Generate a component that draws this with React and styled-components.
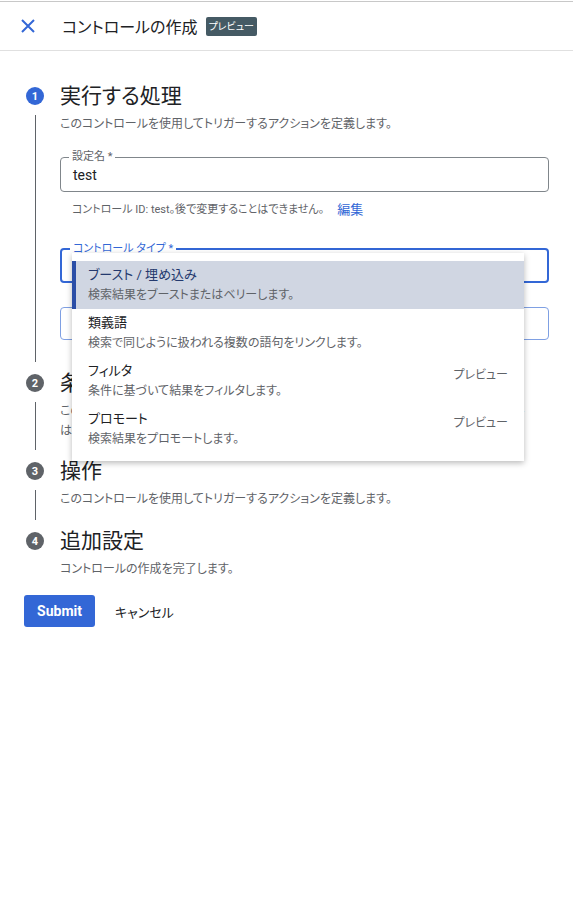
import styled, { createGlobalStyle } from 'styled-components';

const GlobalStyle = createGlobalStyle`
  body {
    margin: 0;
    padding-top: 1px;
    background: #fff;
    font-family: Roboto, "Noto Sans CJK JP", sans-serif;
    font-feature-settings: "palt";
    color: #202124;
  }
`;

const steps = [
  {
    n: 1,
    title: '実行する処理',
    desc: 'このコントロールを使用してトリガーするアクションを定義します。',
    active: true,
    pad: 31,
  },
  {
    n: 2,
    title: '条件',
    desc: 'このコントロールを適用する条件を定義します。条件が指定されていない場合、コントロール\nは常にすべての検索に適用されます。',
    pad: 18,
  },
  {
    n: 3,
    title: '操作',
    desc: 'このコントロールを使用してトリガーするアクションを定義します。',
    pad: 20,
  },
  {
    n: 4,
    title: '追加設定',
    desc: 'コントロールの作成を完了します。',
    last: true,
    pad: 0,
  },
];

const options = [
  { title: 'ブースト / 埋め込み', desc: '検索結果をブーストまたはベリーします。', selected: true },
  { title: '類義語', desc: '検索で同じように扱われる複数の語句をリンクします。' },
  { title: 'フィルタ', desc: '条件に基づいて結果をフィルタします。', preview: true },
  { title: 'プロモート', desc: '検索結果をプロモートします。', preview: true },
];

const App = () => {
  return (
    <Page>
      <GlobalStyle />
      <Header>
        <CloseButton aria-label="閉じる">
          <svg width="14" height="14" viewBox="0 0 14 14">
            <path d="M1 1 L13 13 M13 1 L1 13" stroke="#3367d6" strokeWidth="2" fill="none" />
          </svg>
        </CloseButton>
        <HeaderTitle>コントロールの作成</HeaderTitle>
        <Badge>プレビュー</Badge>
      </Header>
      <Main>
        {steps.map((s) => (
          <Step key={s.n}>
            <Circle active={s.active}>{s.n}</Circle>
            <StepTitle>{s.title}</StepTitle>
            <Rail>{!s.last && <RailLine />}</Rail>
            <StepBody pad={s.pad}>
              <Description>{s.desc}</Description>
              {s.active && (
                <>
                  <Field>
                    <FieldLabel>設定名 *</FieldLabel>
                    <FieldValue>test</FieldValue>
                  </Field>
                  <Helper>
                    <span>コントロール ID: test。後で変更することはできません。</span>
                    <EditLink>編集</EditLink>
                  </Helper>
                  <Field focused spaced>
                    <FieldLabel focused>コントロール タイプ *</FieldLabel>
                    <Menu>
                      {options.map((o) => (
                        <MenuItem key={o.title} selected={o.selected}>
                          <ItemText>
                            <ItemTitle selected={o.selected}>{o.title}</ItemTitle>
                            <ItemDesc>{o.desc}</ItemDesc>
                          </ItemText>
                          {o.preview && <ItemTag>プレビュー</ItemTag>}
                        </MenuItem>
                      ))}
                    </Menu>
                  </Field>
                  <Field hint short />
                </>
              )}
            </StepBody>
          </Step>
        ))}
        <Actions>
          <SubmitButton>Submit</SubmitButton>
          <CancelButton>キャンセル</CancelButton>
        </Actions>
      </Main>
    </Page>
  );
};

const Page = styled.div`
  border-top: 1px solid #c8c8c8;
  min-height: 910px;
`;

const Header = styled.div`
  height: 48px;
  display: flex;
  align-items: center;
  padding: 0 0 0 21px;
  border-bottom: 1px solid #e0e0e0;
`;

const CloseButton = styled.button`
  border: none;
  background: none;
  padding: 0;
  width: 14px;
  height: 14px;
  display: flex;
  margin-right: 27px;
  cursor: pointer;
`;

const HeaderTitle = styled.h1`
  margin: 0;
  font-size: 16px;
  font-weight: 400;
  color: #202124;
`;

const Badge = styled.span`
  margin-left: 8px;
  background: #455a64;
  color: #fff;
  font-size: 10px;
  line-height: 19px;
  padding: 0 3px;
  border-radius: 2px;
`;

const Main = styled.div`
  padding: 33px 24px 24px;
`;

const Step = styled.div`
  display: grid;
  grid-template-columns: 22px 1fr;
  column-gap: 14px;
`;

const Circle = styled.div`
  width: 18px;
  height: 18px;
  margin: 3px 2px;
  border-radius: 50%;
  background: ${(p) => (p.active ? '#3367d6' : '#5f6368')};
  color: #fff;
  font-size: 11px;
  font-weight: 700;
  display: flex;
  align-items: center;
  justify-content: center;
`;

const StepTitle = styled.h2`
  margin: 0;
  font-size: 21px;
  line-height: 24px;
  font-weight: 400;
  color: #202124;
`;

const Rail = styled.div`
  display: flex;
  justify-content: center;
`;

const RailLine = styled.div`
  width: 1px;
  background: #5f6368;
  margin: 7px 0 9px;
`;

const StepBody = styled.div`
  padding-bottom: ${(p) => p.pad}px;
  min-width: 0;
`;

const Description = styled.p`
  margin: 6px 0 0;
  font-size: 12px;
  line-height: 20px;
  color: #5f6368;
  white-space: pre-line;
`;

const Field = styled.div`
  position: relative;
  height: ${(p) => (p.short ? '33px' : '35px')};
  margin-top: ${(p) => (p.spaced ? '30px' : p.hint ? '24px' : '23px')};
  box-sizing: border-box;
  border: ${(p) => (p.focused ? '2px solid #3367d6' : p.hint ? '1px solid #7fa0e3' : '1px solid #80868b')};
  border-radius: 4px;
  display: flex;
  align-items: center;
  padding: 0 12px;
`;

const FieldLabel = styled.span`
  position: absolute;
  top: -9px;
  left: 8px;
  padding: 0 3px;
  background: #fff;
  font-size: 11px;
  line-height: 16px;
  color: ${(p) => (p.focused ? '#3367d6' : '#5f6368')};
`;

const FieldValue = styled.span`
  font-size: 14px;
  color: #202124;
`;

const Helper = styled.div`
  margin-top: 10px;
  padding-left: 12px;
  display: flex;
  align-items: center;
  font-size: 11px;
  line-height: 16px;
  color: #5f6368;
`;

const EditLink = styled.a`
  margin-left: 13px;
  font-size: 13px;
  color: #3367d6;
  cursor: pointer;
`;

const Menu = styled.div`
  position: absolute;
  top: 3px;
  left: 10px;
  width: 452px;
  z-index: 2;
  background: #fff;
  padding: 8px 0;
  box-shadow: 0 2px 6px rgba(0, 0, 0, 0.28);
`;

const MenuItem = styled.div`
  height: 48px;
  box-sizing: border-box;
  display: flex;
  align-items: flex-start;
  justify-content: space-between;
  padding: 4px 16px 0 ${(p) => (p.selected ? '12px' : '16px')};
  border-left: ${(p) => (p.selected ? '4px solid #2b4ea6' : 'none')};
  background: ${(p) => (p.selected ? '#d0d6e2' : '#fff')};
`;

const ItemText = styled.div`
  display: flex;
  flex-direction: column;
`;

const ItemTitle = styled.span`
  font-size: 13px;
  line-height: 20px;
  color: ${(p) => (p.selected ? '#23396e' : '#202124')};
`;

const ItemDesc = styled.span`
  font-size: 12px;
  line-height: 20px;
  color: #5f6368;
`;

const ItemTag = styled.span`
  margin-top: 4px;
  font-size: 12px;
  line-height: 20px;
  color: #5f6368;
`;

const Actions = styled.div`
  margin-top: 16px;
  display: flex;
  align-items: center;
  gap: 20px;
`;

const SubmitButton = styled.button`
  width: 71px;
  height: 32px;
  border: none;
  border-radius: 3px;
  background: #3367d6;
  color: #fff;
  font-family: Roboto, "Noto Sans CJK JP", sans-serif;
  font-size: 14px;
  font-weight: 700;
  cursor: pointer;
`;

const CancelButton = styled.button`
  border: none;
  background: none;
  padding: 0;
  font-family: Roboto, "Noto Sans CJK JP", sans-serif;
  font-feature-settings: "palt";
  font-size: 13px;
  color: #202124;
  cursor: pointer;
`;

export default App;
